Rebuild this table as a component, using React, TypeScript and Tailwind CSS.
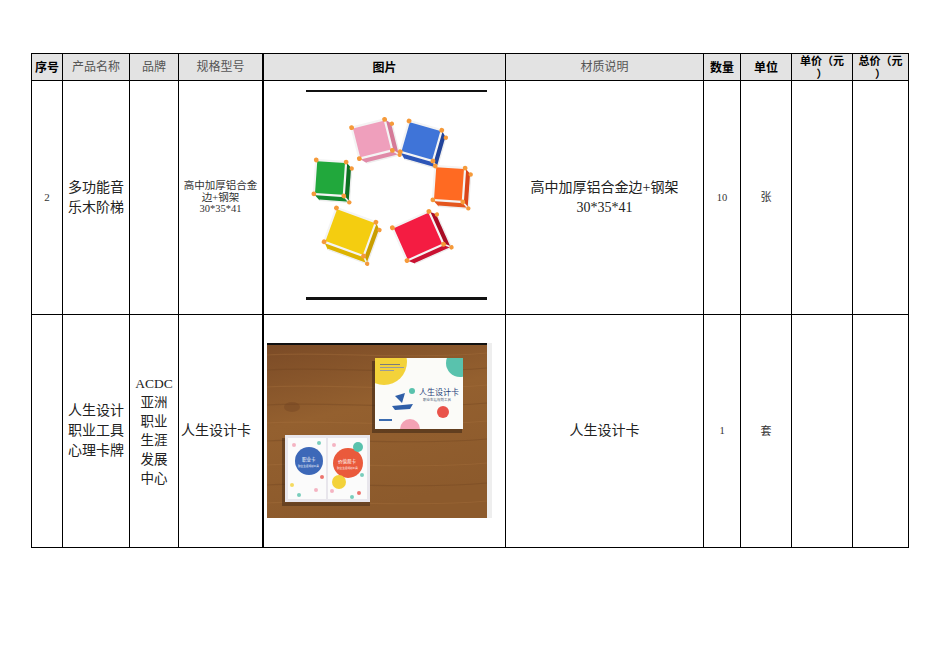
import React from "react";

const serif = { fontFamily: '"Liberation Serif", "Noto Sans CJK SC", serif' };

function Cube({ cx, cy, w, h, rot, face, side, top }: { cx: number; cy: number; w: number; h: number; rot: number; face: string; side: string; top: string }) {
  const x = -w / 2;
  const y = -h / 2;
  const d = 6;
  return (
    <g transform={`translate(${cx} ${cy}) rotate(${rot})`}>
      <polygon points={`${x + w},${y} ${x + w + d},${y + d} ${x + w + d},${y + h + d} ${x + w},${y + h}`} fill={side} />
      <polygon points={`${x},${y + h} ${x + w},${y + h} ${x + w + d},${y + h + d} ${x + d},${y + h + d}`} fill={top} />
      <rect x={x} y={y} width={w} height={h} fill={face} stroke="#f4f4f4" strokeWidth={2.2} />
      <line x1={x + w} y1={y + h} x2={x + w + d} y2={y + h + d} stroke="#f4f4f4" strokeWidth={1.6} />
      <line x1={x + w + d} y1={y + d} x2={x + w + d} y2={y + h + d} stroke="#eee" strokeWidth={1.4} />
      <line x1={x + d} y1={y + h + d} x2={x + w + d} y2={y + h + d} stroke="#eee" strokeWidth={1.4} />
      <circle cx={x} cy={y} r={2.4} fill="#f59a3a" />
      <circle cx={x + w} cy={y} r={2.4} fill="#f59a3a" />
      <circle cx={x} cy={y + h} r={2.4} fill="#f59a3a" />
      <circle cx={x + w} cy={y + h} r={2.4} fill="#f59a3a" />
      <circle cx={x + w + d} cy={y + h + d} r={2.2} fill="#f59a3a" />
      <circle cx={x + w + d} cy={y + d} r={2.2} fill="#f59a3a" />
    </g>
  );
}

function CubesImage() {
  return (
    <svg width="242" height="233" viewBox="0 0 242 233" className="block">
      <rect x="42" y="9" width="181" height="2" fill="#111" />
      <Cube cx={108} cy={58} w={34} h={32} rot={-14} face="#ef9fbc" side="#d57a98" top="#e08aa8" />
      <Cube cx={157} cy={60} w={34} h={32} rot={16} face="#3f74d8" side="#22449a" top="#2d56b8" />
      <Cube cx={66} cy={97} w={30} h={34} rot={4} face="#21a83c" side="#0d6f22" top="#128a2e" />
      <Cube cx={185} cy={103} w={30} h={34} rot={4} face="#ff6a22" side="#d9441a" top="#e4561e" />
      <Cube cx={86} cy={151} w={42} h={36} rot={20} face="#f4cd10" side="#c99e00" top="#ddb300" />
      <Cube cx={154} cy={155} w={40} h={36} rot={-24} face="#f41c42" side="#a80c24" top="#c91232" />
      <rect x="42" y="216" width="181" height="3" fill="#111" />
    </svg>
  );
}

function CardsImage() {
  return (
    <svg width="242" height="233" viewBox="0 0 242 233" className="block">
      <defs>
        <linearGradient id="wood" x1="0" y1="0" x2="0.3" y2="1">
          <stop offset="0" stopColor="#7a4a26" />
          <stop offset="0.45" stopColor="#94602f" />
          <stop offset="1" stopColor="#8c5a2c" />
        </linearGradient>
        <clipPath id="bigbox">
          <rect x="111" y="43" width="88" height="71" />
        </clipPath>
        <clipPath id="leftcard">
          <rect x="24" y="123" width="38" height="61" />
        </clipPath>
        <clipPath id="rightcard">
          <rect x="64" y="123" width="39" height="61" />
        </clipPath>
      </defs>
      <rect x="223" y="28" width="5" height="175" fill="#eeeeee" />
      <rect x="3" y="28" width="220" height="175" fill="url(#wood)" />
      {[40, 55, 72, 90, 108, 126, 150, 170, 188].map((yy, i) => (
        <path key={i} d={`M3 ${yy} C 60 ${yy - 4}, 140 ${yy + 5}, 223 ${yy - 2}`} stroke={i % 2 ? "#6e4120" : "#a8733f"} strokeOpacity={0.35} strokeWidth={1.2} fill="none" />
      ))}
      <ellipse cx="28" cy="92" rx="8" ry="5" fill="#6e4020" opacity="0.35" />
      <rect x="3" y="28" width="220" height="2" fill="#111" />
      <rect x="108" y="46" width="90" height="72" fill="#3a2414" opacity="0.55" />
      <rect x="111" y="43" width="88" height="71" fill="#fbfbf8" />
      <g clipPath="url(#bigbox)">
        <circle cx="120" cy="47" r="23" fill="#f3d23a" />
        <circle cx="196" cy="48" r="14" fill="#59c2ad" />
        <circle cx="146" cy="114" r="10" fill="#f3a2b4" />
      </g>
      <rect x="116" y="49" width="20" height="1" fill="#7a7a7a" />
      <rect x="116" y="52" width="24" height="1" fill="#9a9a9a" />
      <rect x="116" y="55" width="14" height="1" fill="#9a9a9a" />
      <circle cx="179" cy="97" r="6" fill="#e9534a" />
      <circle cx="148" cy="76" r="3" fill="#59c2ad" />
      <text x="155" y="80" fontSize="8" fill="#1f3f7a" style={{ fontFamily: '"Noto Sans CJK SC", sans-serif' }}>人生设计卡</text>
      <text x="159" y="86" fontSize="3.5" fill="#4a5a7a" style={{ fontFamily: '"Noto Sans CJK SC", sans-serif' }}>职业生涯规划工具</text>
      <polygon points="131,81 141,78 138,88" fill="#2f5fa8" />
      <path d="M128 91 L149 89 L146 94 L131 95 Z" fill="#2f5fa8" />
      <rect x="115" y="104" width="13" height="2" fill="#3b6cb0" />
      <rect x="18" y="123" width="88" height="68" fill="#3a2414" opacity="0.45" />
      <rect x="21" y="120" width="85" height="67" fill="#e8e6ec" />
      <rect x="24" y="123" width="38" height="61" fill="#fbfbfb" />
      <rect x="64" y="123" width="39" height="61" fill="#fbfbfb" />
      <g clipPath="url(#leftcard)">
        {[[30, 130, "#f3a2b4"], [55, 128, "#59c2ad"], [28, 170, "#f3d23a"], [52, 175, "#f3a2b4"], [35, 180, "#59c2ad"], [58, 162, "#e9534a"]].map(([a, b, c], i) => (
          <circle key={i} cx={a as number} cy={b as number} r={2} fill={c as string} opacity={0.8} />
        ))}
        <circle cx="45" cy="146" r="14" fill="#3d68b8" />
      </g>
      <g clipPath="url(#rightcard)">
        {[[70, 130, "#f3a2b4"], [98, 160, "#59c2ad"], [68, 176, "#f3a2b4"], [95, 178, "#e9534a"], [88, 182, "#59c2ad"]].map(([a, b, c], i) => (
          <circle key={i} cx={a as number} cy={b as number} r={2} fill={c as string} opacity={0.8} />
        ))}
        <circle cx="84" cy="148" r="15" fill="#ea5a3c" />
        <circle cx="75" cy="167" r="7" fill="#f3d23a" />
        <circle cx="94" cy="132" r="5" fill="#59c2ad" />
      </g>
      <text x="38" y="146" fontSize="4.5" fill="#fff" style={{ fontFamily: '"Noto Sans CJK SC", sans-serif' }}>职业卡</text>
      <text x="34" y="152" fontSize="2.6" fill="#fff" style={{ fontFamily: '"Noto Sans CJK SC", sans-serif' }}>职业生涯规划工具</text>
      <text x="74" y="148" fontSize="4.5" fill="#fff" style={{ fontFamily: '"Noto Sans CJK SC", sans-serif' }}>价值观卡</text>
      <text x="73" y="154" fontSize="2.6" fill="#fff" style={{ fontFamily: '"Noto Sans CJK SC", sans-serif' }}>职业生涯规划工具</text>
    </svg>
  );
}

const cell = "border-r border-b border-black flex items-center justify-center text-center overflow-hidden";
const hcell = cell + " bg-[#e3e3e3]";
const hb = "text-[12px] font-bold text-black leading-[12px]";
const hb2 = "text-[11px] font-bold text-black leading-[13px] h-[13px] block";
const hn = "text-[12px] text-[#555] leading-[12px]";
const sans = { fontFamily: '"Noto Sans CJK SC", sans-serif' };

export default function App() {
  return (
    <div className="w-[936px] h-[662px] bg-white relative" style={serif}>
      <div className="pt-[53px] pl-[31px]">
        <div
          className="grid border-l border-t border-black w-[878px]"
          style={{ gridTemplateColumns: "31px 67px 49px 85px 242px 198px 37px 51px 61px 56px", gridTemplateRows: "27px 234px 233px" }}
        >
          <div className={hcell}><span className={hb} style={sans}>序号</span></div>
          <div className={hcell}><span className={hn}>产品名称</span></div>
          <div className={hcell}><span className={hn}>品牌</span></div>
          <div className={hcell + " border-r-2"}><span className={hn}>规格型号</span></div>
          <div className={hcell}><span className={hb} style={sans}>图片</span></div>
          <div className={hcell}><span className={hn}>材质说明</span></div>
          <div className={hcell}><span className={hb} style={sans}>数量</span></div>
          <div className={hcell}><span className={hb} style={sans}>单位</span></div>
          <div className={hcell + " flex-col"}><span className={hb2} style={sans}>单价（元</span><span className={hb2} style={sans}>）</span></div>
          <div className={hcell + " flex-col"}><span className={hb2} style={sans}>总价（元</span><span className={hb2} style={sans}>）</span></div>

          <div className={cell}><span className="text-[11px] text-[#333]">2</span></div>
          <div className={cell}><span className="text-[14px] leading-[20px] text-[#222]">多功能音<br />乐木阶梯</span></div>
          <div className={cell}></div>
          <div className={cell + " border-r-2"}><span className="text-[10.5px] leading-[11.5px] text-[#333]">高中加厚铝合金<br />边+钢架<br />30*35*41</span></div>
          <div className="border-r border-b border-black overflow-hidden"><CubesImage /></div>
          <div className={cell}><span className="text-[14px] leading-[20px] text-[#222]">高中加厚铝合金边+钢架<br />30*35*41</span></div>
          <div className={cell}><span className="text-[10.5px] text-[#333]">10</span></div>
          <div className={cell}><span className="text-[11px] text-[#333]">张</span></div>
          <div className={cell}></div>
          <div className={cell}></div>

          <div className={cell}></div>
          <div className={cell}><span className="text-[14px] leading-[20px] text-[#222]">人生设计<br />职业工具<br />心理卡牌</span></div>
          <div className={cell}><span className="text-[13.5px] leading-[19px] text-[#222]">ACDC<br />亚洲<br />职业<br />生涯<br />发展<br />中心</span></div>
          <div className={cell + " border-r-2 justify-start pl-[2px]"}><span className="text-[14px] leading-[20px] text-[#222]">人生设计卡</span></div>
          <div className="border-r border-b border-black overflow-hidden"><CardsImage /></div>
          <div className={cell}><span className="text-[14px] leading-[20px] text-[#222]">人生设计卡</span></div>
          <div className={cell}><span className="text-[10.5px] text-[#333]">1</span></div>
          <div className={cell}><span className="text-[11px] text-[#333]">套</span></div>
          <div className={cell}></div>
          <div className={cell}></div>
        </div>
      </div>
    </div>
  );
}
